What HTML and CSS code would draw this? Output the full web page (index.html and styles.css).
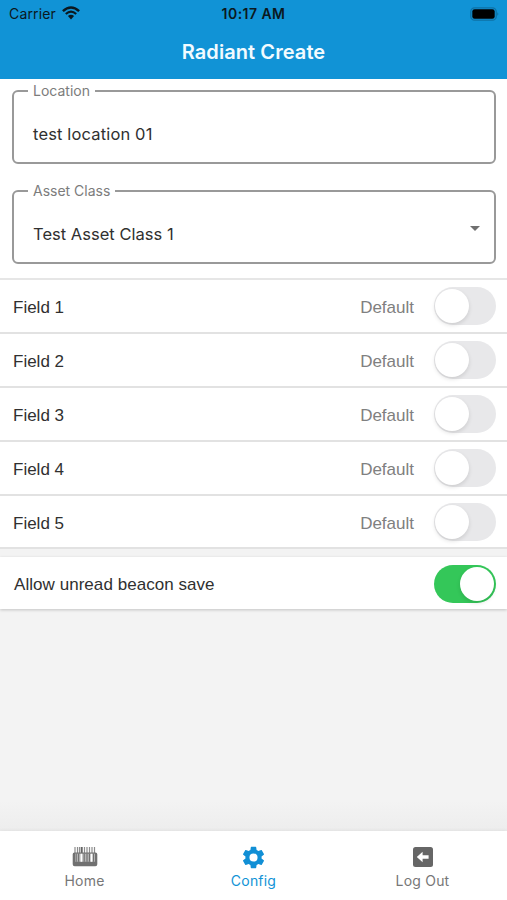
FILE: index.html
```html
<!DOCTYPE html>
<html lang="en">
<head>
<meta charset="utf-8">
<title>Radiant Create</title>
<link rel="stylesheet" href="styles.css">
</head>
<body>
<div class="screen">
  <header class="header">
    <div class="status">
      <div class="carrier"><span>Carrier</span>
        <svg class="wifi" width="18" height="14" viewBox="0 0 18 14"><path d="M.9 5.1Q9-2.2 17.1 5.1" fill="none" stroke="#0b1820" stroke-width="2.5"/><path d="M3.8 8Q9 3.4 14.2 8" fill="none" stroke="#0b1820" stroke-width="2.2"/><path d="M5.9 10.1Q9 7.3 12.1 10.1L9 13.4z" fill="#0b1820"/></svg>
      </div>
      <div class="time">10:17 AM</div>
      <svg class="battery" width="30" height="14" viewBox="0 0 30 14"><rect x=".8" y=".8" width="25.4" height="12.4" rx="3.8" fill="none" stroke="#0e71a5" stroke-width="1.3"/><rect x="2.3" y="2.3" width="22.4" height="9.4" rx="2.3" fill="#000"/><path d="M27.5 5q1.6 2 0 4z" fill="#0c5f8b"/></svg>
    </div>
    <h1 class="title">Radiant Create</h1>
  </header>
  <main class="content">
    <section class="form">
      <fieldset class="field"><legend class="label location">Location</legend><span class="value value-location">test location 01</span></fieldset>
      <fieldset class="field"><legend class="label asset">Asset Class</legend><span class="value value-asset">Test Asset Class 1</span><i class="caret"></i></fieldset>
    </section>
    <section class="list">
      <div class="row"><span class="name">Field 1</span><span class="default">Default</span><span class="toggle"><i class="knob"></i></span></div>
      <div class="row"><span class="name">Field 2</span><span class="default">Default</span><span class="toggle"><i class="knob"></i></span></div>
      <div class="row"><span class="name">Field 3</span><span class="default">Default</span><span class="toggle"><i class="knob"></i></span></div>
      <div class="row"><span class="name">Field 4</span><span class="default">Default</span><span class="toggle"><i class="knob"></i></span></div>
      <div class="row"><span class="name">Field 5</span><span class="default">Default</span><span class="toggle"><i class="knob"></i></span></div>
    </section>
    <section class="allow"><span class="allow-text">Allow unread beacon save</span><span class="toggle on"><i class="knob"></i></span></section>
  </main>
  <nav class="tabs">
    <div class="tab">
      <svg class="icon" width="26" height="24" viewBox="0 0 26 24"><path d="M3 2v6M5.5 2v6M7.5 2v6M12.5 2v6M15 2v6M17.5 2v6M20 2v6M22.5 2v6" stroke="#8c8c8c" stroke-width="1.2"/><path d="M9.7 2v6" stroke="#646464" stroke-width="2"/><path d="M2.5 7.5h21q1.8 0 1.8 1.8v10q0 2-2 2H2.7q-2 0-2-2v-10q0-1.8 1.8-1.8z" fill="#707070"/><path d="M3 8.7h20v8H3z" fill="#b5b5b5"/><path d="M4.2 8.7v8M6.6 8.7v8M12.2 8.7v8M15 8.7v8M17.5 8.7v8M21.5 8.7v8" stroke="#707070" stroke-width="1.1"/><path d="M9.4 8.7v8M19.5 8.7v8" stroke="#fff" stroke-width="1.7"/></svg>
      <span class="tab-label home">Home</span>
    </div>
    <div class="tab active">
      <svg class="icon" width="27" height="27" viewBox="0 0 24 24"><path fill="#118fd5" d="M19.14 12.94c.04-.3.06-.61.06-.94 0-.32-.02-.64-.07-.94l2.03-1.58c.18-.14.23-.41.12-.61l-1.92-3.32c-.12-.22-.37-.29-.59-.22l-2.39.96c-.5-.38-1.03-.7-1.62-.94l-.36-2.54c-.04-.24-.24-.41-.48-.41h-3.84c-.24 0-.43.17-.47.41l-.36 2.54c-.59.24-1.13.57-1.62.94l-2.39-.96c-.22-.08-.47 0-.59.22L2.74 8.87c-.12.21-.08.47.12.61l2.03 1.58c-.05.3-.09.63-.09.94s.02.64.07.94l-2.03 1.58c-.18.14-.23.41-.12.61l1.92 3.32c.12.22.37.29.59.22l2.39-.96c.5.38 1.03.7 1.62.94l.36 2.54c.05.24.24.41.48.41h3.84c.24 0 .44-.17.47-.41l.36-2.54c.59-.24 1.13-.56 1.62-.94l2.39.96c.22.08.47 0 .59-.22l1.92-3.32c.12-.22.07-.47-.12-.61zM12 15.6A3.6 3.6 0 1 1 12 8.4a3.6 3.6 0 0 1 0 7.2z"/></svg>
      <span class="tab-label config">Config</span>
    </div>
    <div class="tab">
      <svg class="icon" width="20" height="20" viewBox="0 0 20 20"><rect width="20" height="20" rx="2.5" fill="#666"/><path d="M3.8 10l5.8-5.2v3.4h6v3.6h-6v3.4z" fill="#fff"/></svg>
      <span class="tab-label logout">Log Out</span>
    </div>
  </nav>
</div>
</body>
</html>
```

FILE: styles.css
```css
* { box-sizing: border-box; }
body { margin: 0; font-family: Inter, "Liberation Sans", sans-serif; color: #303030; }
.screen { width: 507px; height: 900px; display: flex; flex-direction: column; overflow: hidden; background: #f3f3f3; }
.header { flex: none; height: 79px; background: #1193d6; }
.status { height: 28px; padding: 0 7px 0 9px; display: grid; grid-template-columns: 1fr auto 1fr; align-items: center; font-size: 14px; line-height: 28px; color: #0b1820; }
.carrier { display: flex; align-items: center; gap: 6px; letter-spacing: .15px; }
.wifi { display: block; margin-top: -2px; }
.time { font-weight: 600; letter-spacing: .45px; margin-right: 2px; }
.battery { justify-self: end; margin-top: -1px; }
.title { margin: 0; text-align: center; font-size: 20px; line-height: 49px; font-weight: 600; letter-spacing: .08px; color: #f2fbff; }
.content { flex: 1; min-height: 0; background: linear-gradient(#f3f3f3 96%, #ededed); }
.form { height: 199px; padding: 3px 11px 0 12px; background: #fff; }
.field { position: relative; display: block; width: 484px; min-width: 0; height: 82px; margin: 0 0 18px; padding: 0 0 0 14px; border: 2px solid #999; border-radius: 6px; }
.label { height: 18px; padding: 0 5px; font-size: 14px; line-height: 18px; color: #7c7c7c; white-space: nowrap; }
.value { display: block; padding: 24px 0 0 5px; font-size: 16.5px; line-height: 20px; white-space: nowrap; }
.value-location { letter-spacing: .15px; }
.value-asset { letter-spacing: .02px; }
.caret { position: absolute; right: 14px; top: 26px; border: 5px solid transparent; border-top-color: #707070; border-bottom: 0; }
.list { border-top: 2px solid #e6e6e6; background: #fff; }
.row { display: flex; align-items: center; height: 53.9px; padding: 0 11px 0 13px; border-bottom: 2px solid #e2e2e2; font: 17px "Liberation Sans", Arial, sans-serif; }
.name { flex: 1; padding-top: 4px; }
.default { padding-top: 4px; margin-right: 20px; color: #808080; }
.toggle { flex: none; display: flex; align-items: center; width: 62px; height: 38px; padding: 0 2px 0 1px; border-radius: 19px; background: #e8e8ea; }
.knob { width: 34px; height: 34px; border-radius: 50%; background: #fff; box-shadow: 0 2px 4px rgba(0,0,0,.12); }
.on { justify-content: flex-end; background: #34c759; }
.allow { display: flex; align-items: center; justify-content: space-between; height: 52px; margin-top: 8px; padding: 1px 11px 0 14px; background: #fff; box-shadow: 0 1px 3px rgba(0,0,0,.2); font: 17px "Liberation Sans", Arial, sans-serif; }
.allow-text { padding-top: 2px; letter-spacing: .05px; }
.tabs { flex: none; display: grid; grid-template-columns: repeat(3, 1fr); height: 69px; background: #fff; box-shadow: 0 -1px 3px rgba(0,0,0,.05); }
.tab { display: grid; grid-template-rows: 26px 18px; align-content: start; justify-items: center; align-items: center; padding-top: 13px; color: #777; }
.icon { display: block; }
.tab-label { font-size: 14px; line-height: 18px; letter-spacing: .2px; margin-top: 3px; }
.active { color: #1193d6; }
```
